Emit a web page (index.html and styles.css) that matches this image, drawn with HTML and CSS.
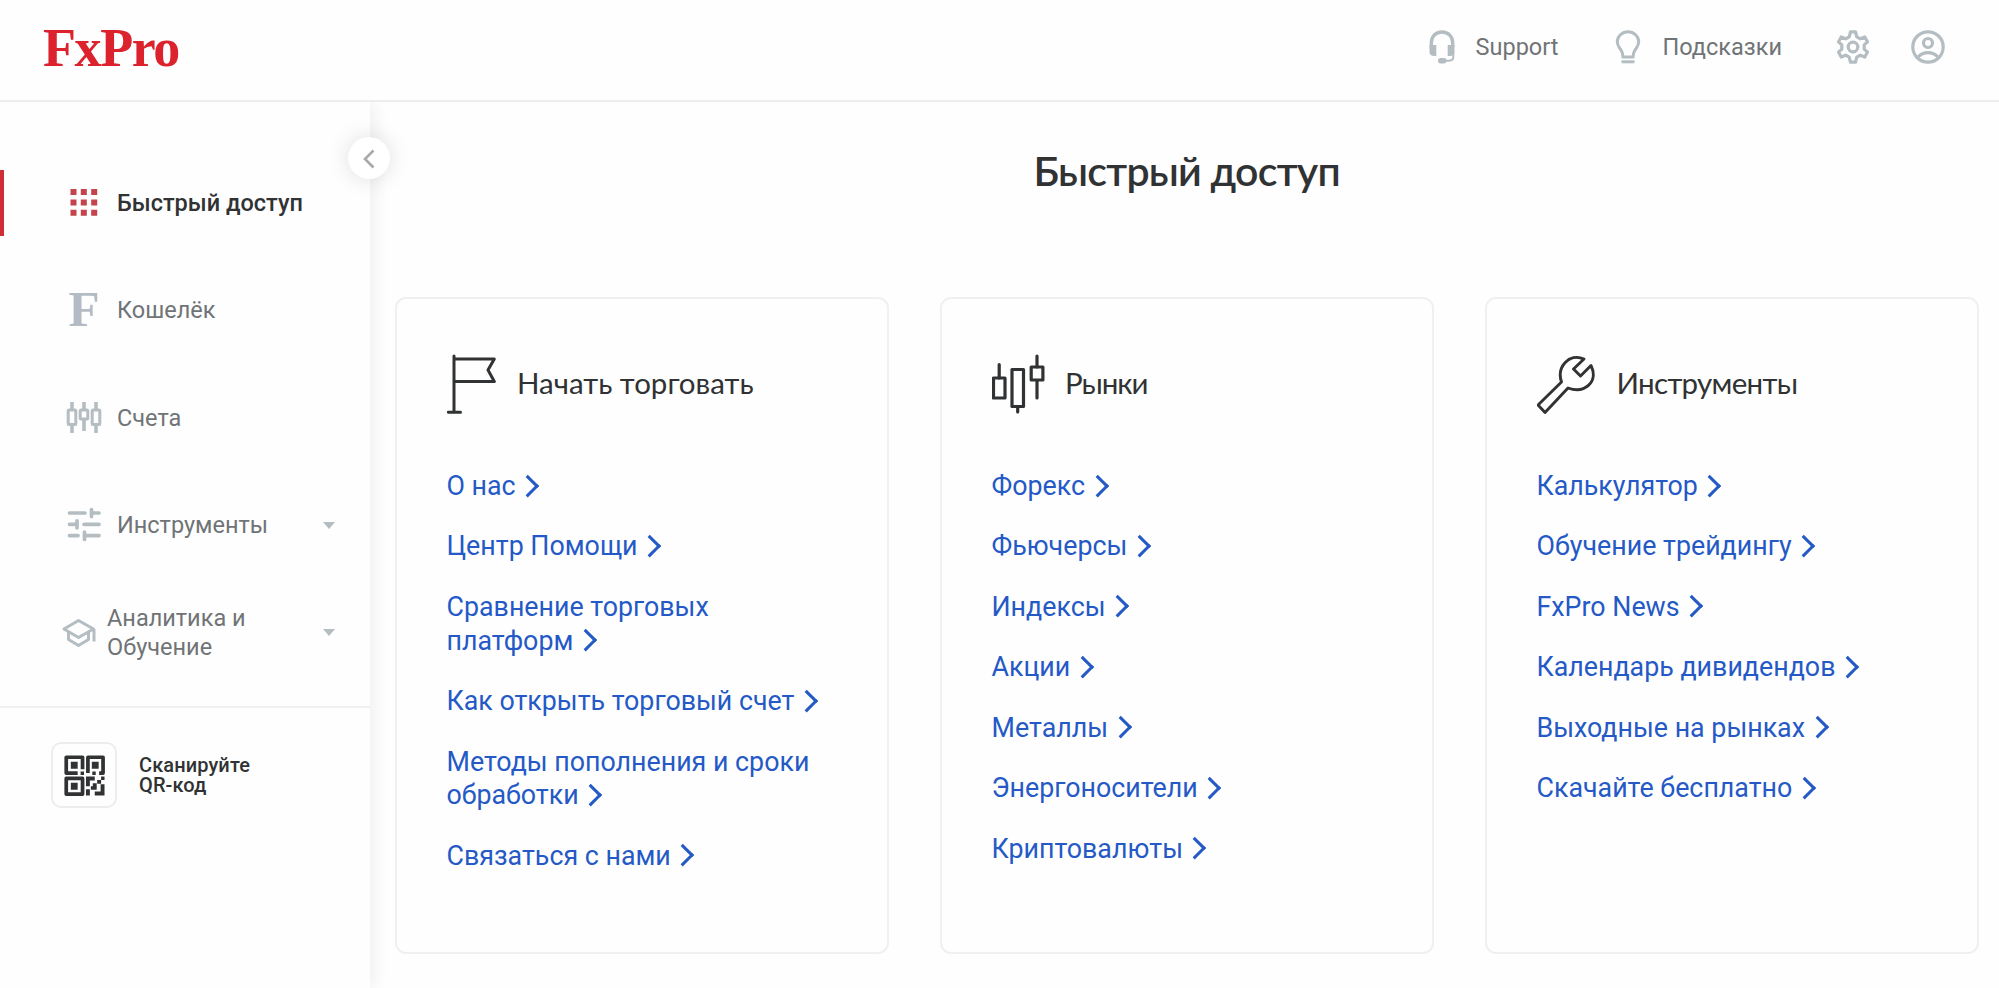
FILE: index.html
```html
<!DOCTYPE html>
<html lang="ru">
<head>
<meta charset="utf-8">
<title>FxPro</title>
<link rel="stylesheet" href="styles.css">
</head>
<body>
<header class="topbar">
  <div class="logo">FxPro</div>
  <nav class="topnav">
    <a class="topnav-item support"><svg class="ico-headset" width="26" height="34" viewBox="0 0 26 34"><path d="M2.300 17V13C2.300 6.500 6.500 2 13 2S23.700 6.500 23.700 13V17" fill="none" stroke="#b4bdc1" stroke-width="3.400"/><path d="M0.500 15H7.300V26H4.500Q.5 25.500.5 22ZM25.500 15H18.700V26H21.500Q25.500 25.500 25.500 22Z" fill="#b4bdc1"/><path d="M24.300 22V27Q24.300 30.500 20 30.800H15" fill="none" stroke="#b4bdc1" stroke-width="2"/><rect x="9" y="28" width="8.500" height="5.500" rx="2.700" fill="#b4bdc1"/></svg><span>Support</span></a>
    <a class="topnav-item hints"><svg width="26" height="34" viewBox="0 0 26 34"><path d="M8 27L7.200 22.500C5.500 18.500 2.300 16.500 2.300 11.800A10.700 10 0 0 1 23.700 11.800C23.700 16.500 20.500 18.500 18.800 22.500L18 27Z" fill="none" stroke="#b4bdc1" stroke-width="3"/><path d="M6.500 31.800H19.500" stroke="#b4bdc1" stroke-width="3"/></svg><span>Подсказки</span></a>
    <svg class="gear" width="34" height="34" viewBox="0 0 34 34" fill="none" stroke="#b4bdc1" stroke-width="3.200" stroke-linejoin="round"><path d="M14.500 1.800H19.500L20.800 6.800L24.300 8.800L28.800 7L31.500 11.900L28.200 14.900V19.100L31.500 22.100L28.800 27L24.300 25.200L20.800 27.200L19.500 32.200H14.500L13.200 27.200L9.700 25.200L5.200 27L2.500 22.100L5.800 19.100V14.900L2.500 11.900L5.200 7L9.700 8.800L13.200 6.800Z"/><circle cx="17" cy="17" r="4.800"/></svg>
    <svg class="user" width="34" height="34" viewBox="0 0 34 34" fill="none" stroke="#b4bdc1" stroke-width="3.200"><circle cx="17" cy="17" r="15.200"/><circle cx="17" cy="13" r="4.500"/><path d="M7 27Q11 22.700 17 22.700T27 27"/></svg>
  </nav>
</header>
<div class="body">
  <aside class="sidebar">
    <button class="collapse"><svg width="12" height="20" viewBox="0 0 12 20"><path d="M10.500 1.500L2 10L10.500 18.500" fill="none" stroke="#a9a9a9" stroke-width="2.600"/></svg></button>
    <nav class="menu">
      <a class="menu-item active"><svg class="menu-icon" width="36" height="36" viewBox="0 0 36 36" fill="#c3444a"><path d="M4.500 4h6v6h-6zM14.800 4h6v6h-6zM25.200 4h6v6h-6zM4.500 14.400h6v6h-6zM14.800 14.400h6v6h-6zM25.200 14.400h6v6h-6zM4.500 24.700h6v6h-6zM14.800 24.700h6v6h-6zM25.200 24.700h6v6h-6z"/></svg><span>Быстрый доступ</span></a>
      <a class="menu-item"><span class="menu-icon letter">F</span><span>Кошелёк</span></a>
      <a class="menu-item"><svg class="menu-icon" width="36" height="36" viewBox="0 0 36 36" fill="none" stroke="#b4bdc1" stroke-width="3"><path d="M6 2V10M6 25V33M18 2V10M18 20V31M30 2V10M30 25V33" stroke-width="3.600"/><rect x="2.200" y="10" width="7.600" height="14.500" rx="1"/><rect x="14.200" y="10" width="7.600" height="9" rx="1"/><rect x="26.200" y="10" width="7.600" height="14.500" rx="1"/></svg><span>Счета</span></a>
      <a class="menu-item"><svg class="menu-icon" width="36" height="36" viewBox="0 0 36 36" fill="none" stroke="#b4bdc1" stroke-width="3.700" stroke-linecap="round"><path d="M3.500 6H19M25.500 6H33M25.500 2.500V9.500M3.500 17.300H11M11 13.800V20.800M18 17.300H33M3.500 28.600H12M18.500 28.600H33M18.500 25V32.500"/></svg><span>Инструменты</span><i class="caret"></i></a>
      <a class="menu-item wide"><svg class="menu-icon" width="36" height="32" viewBox="0 0 36 32" fill="none" stroke="#b4bdc1" stroke-width="3" stroke-linejoin="round"><path d="M3 12L17.500 3.500L32.500 12L17.500 20.500ZM7.500 14.500V22.500L17.500 28.500L27.500 22.500V14.500M33 12V24.500"/></svg><span>Аналитика и<br>Обучение</span><i class="caret"></i></a>
    </nav>
    <div class="qr">
      <div class="qr-box"><svg width="41" height="41" viewBox="0 0 42 42" fill="none" stroke="#303233" stroke-width="3.800" stroke-linejoin="round"><path d="M19 14.500V2.300H2.300V18.500H14M24.500 18.500V2.300H40V18.500H36M2.300 24H19V40H2.300Z"/><path fill="#303233" stroke="none" d="M7 7h7v7h-7zM28.500 7h7v7h-7zM7 28.500h7v7h-7zM17 17h3.500v3.500h-3.500zM29 17h3.500v3.500h-3.500zM22.500 22h9v4h-5v6h-4zM34 25.500h4v4h-4zM38 22h3.500v3.500h-3.500zM29.500 29h4v6.500h-6v-3.500h2zM22.500 35h4v6.500h-4zM37.500 30h4v11.500h-10v-4h6z"/></svg></div>
      <div class="qr-text">Сканируйте<br>QR-код</div>
    </div>
  </aside>
  <main class="content">
    <h1>Быстрый доступ</h1>
    <div class="cards">
      <section class="card">
        <h2 class="t1"><svg width="52" height="62" viewBox="0 0 52 62" fill="none" stroke="#303233" stroke-width="3" stroke-linecap="round" stroke-linejoin="round"><path d="M7 2V58M1.300 58.200H13.500M7 5H47.300L41 16L47.300 27.500H7"/></svg><span>Начать торговать</span></h2>
        <ul><li><a>О нас</a></li><li><a>Центр Помощи</a></li><li><a>Сравнение торговых платформ</a></li><li><a>Как открыть торговый счет</a></li><li><a>Методы пополнения и сроки обработки</a></li><li><a>Связаться с нами</a></li></ul>
      </section>
      <section class="card">
        <h2 class="t2"><svg width="56" height="62" viewBox="0 0 56 62" fill="none" stroke="#303233" stroke-width="3.200" stroke-linecap="round" stroke-linejoin="round"><path d="M7.200 10.500V24M25.700 53V58M45 2V13M45 26.500V44"/><rect x="1.500" y="24" width="11.500" height="20"/><rect x="20" y="15.500" width="11.500" height="37"/><rect x="39.200" y="13" width="11.700" height="13"/></svg><span>Рынки</span></h2>
        <ul><li><a>Форекс</a></li><li><a>Фьючерсы</a></li><li><a>Индексы</a></li><li><a>Акции</a></li><li><a>Металлы</a></li><li><a>Энергоносители</a></li><li><a>Криптовалюты</a></li></ul>
      </section>
      <section class="card">
        <h2 class="t3"><svg width="60" height="62" viewBox="0 0 60 62" fill="none" stroke="#303233" stroke-width="2.900" stroke-linejoin="round"><path d="M1 51L24.500 28C19.500 13 32 -1.500 47 5L36.500 15L43.500 22L54 11.500C62 28 47.500 40 31 34L8 58.500Z"/></svg><span>Инструменты</span></h2>
        <ul><li><a>Калькулятор</a></li><li><a>Обучение трейдингу</a></li><li><a>FxPro News</a></li><li><a>Календарь дивидендов</a></li><li><a>Выходные на рынках</a></li><li><a>Скачайте бесплатно</a></li></ul>
      </section>
    </div>
  </main>
</div>
</body>
</html>
```
FILE: styles.css
```css
* { box-sizing: border-box; }
body {
  margin: 0;
  height: 988px;
  overflow: hidden;
  display: flex;
  flex-direction: column;
  background: #fefefe;
  color: #303233;
  font-family: Roboto, "Noto Sans", sans-serif;
}
svg { display: block; flex: none; }
.topbar {
  height: 102px;
  flex: none;
  display: flex;
  justify-content: space-between;
  border-bottom: 2px solid #ededed;
  padding: 0 54px 0 43px;
}
.logo {
  font: bold 54px/60px "Liberation Serif", serif;
  letter-spacing: -1.400px;
  color: #dc232d;
  padding-top: 18px;
}
.topnav {
  display: flex;
  align-items: center;
  height: 94px;
  color: #707476;
  font-size: 23.500px;
}
.topnav-item { display: flex; align-items: center; gap: 21px; }
.hints { margin-left: 57px; }
.gear { margin-left: 53.500px; }
.user { margin-left: 41.500px; }
.body { flex: 1; display: flex; min-height: 0; }
.sidebar {
  position: relative;
  width: 370px;
  flex: none;
  box-shadow: 6px 0 14px rgba(0, 0, 0, .05);
  clip-path: inset(0 -60px 0 0);
}
.collapse {
  position: absolute;
  left: 348px;
  top: 35px;
  width: 42px;
  height: 42px;
  padding: 2px 0 0;
  border: 0;
  border-radius: 50%;
  background: #fff;
  box-shadow: 0 0 22px rgba(0, 0, 0, .13);
  display: flex;
  align-items: center;
  justify-content: center;
}
.menu {
  display: flex;
  flex-direction: column;
  gap: 41.400px;
  padding: 68px 0 40.500px;
  border-bottom: 2px solid #f0f0f0;
}
.menu-item {
  height: 66px;
  display: flex;
  align-items: center;
  padding: 0 35px 0 65.500px;
  gap: 15.500px;
  color: #707476;
  font-size: 23.500px;
  line-height: 28.500px;
}
.active {
  border-left: 4px solid #cf2e36;
  padding-left: 61.500px;
  color: #303233;
  font-weight: 500;
}
.wide { padding-left: 60.500px; gap: 10.500px; }
.menu-icon { width: 36px; flex: none; }
.letter { font: bold 51px/60px "Liberation Serif", serif; color: #b4bbc4; padding: 0 0 2px 3px; }
.caret {
  margin-left: auto;
  border: solid transparent;
  border-width: 7px 6.500px 0;
  border-top-color: #b4bdc1;
}
.qr { display: flex; align-items: center; padding: 34px 0 0 51px; gap: 22px; }
.qr-box {
  width: 66px;
  height: 66px;
  border: 2px solid #ededed;
  border-radius: 10px;
  display: flex;
  align-items: center;
  justify-content: center;
}
.qr-text { font-size: 20px; line-height: 20.400px; font-weight: 500; letter-spacing: .1px; }
.content { flex: 1; padding: 35px 20px 0 24.500px; }
h1 {
  margin: 0;
  text-align: center;
  font: 600 41px/68px Lato, sans-serif;
  letter-spacing: -.750px;
}
.cards {
  display: grid;
  grid-template-columns: repeat(3, 494px);
  gap: 51px;
  margin-top: 91.500px;
}
.card {
  height: 657px;
  border: 2px solid #f0f0f0;
  border-radius: 11px;
  padding: 55px 50px 0;
}
.card h2 {
  margin: 0;
  height: 62px;
  display: flex;
  align-items: center;
  font: 400 29.500px/58px Lato, sans-serif;
}
.card h2 span { padding-bottom: 3px; }
.t1 span { margin-left: 18.500px; letter-spacing: 0; }
.t2 span { margin-left: 17.500px; letter-spacing: -1px; }
.t3 span { margin-left: 20px; letter-spacing: -.700px; }
ul { list-style: none; margin: 54.500px -20px 0 0; padding: 0; display: flex; flex-direction: column; gap: 26.900px; }
li { font-size: 26.800px; line-height: 33.600px; color: #2459c6; max-width: 380px; }
li a::after {
  content: "";
  display: inline-block;
  width: 12.500px;
  height: 12.500px;
  margin-left: 4.500px;
  vertical-align: 2px;
  border: solid #2459c6;
  border-width: 3px 3px 0 0;
  transform: rotate(45deg);
}
```
